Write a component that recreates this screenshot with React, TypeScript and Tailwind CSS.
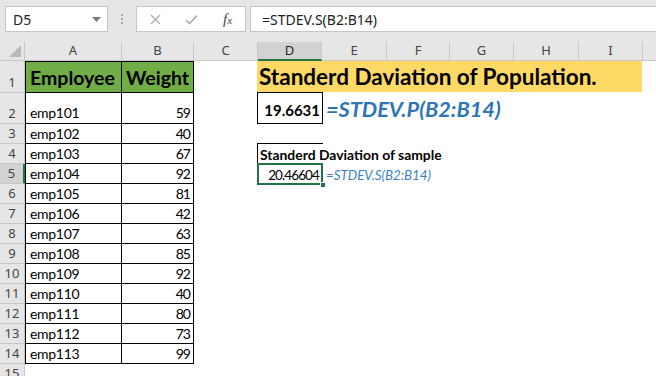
import React from "react";

const data: [string, number][] = [
  ["emp101", 59],
  ["emp102", 40],
  ["emp103", 67],
  ["emp104", 92],
  ["emp105", 81],
  ["emp106", 42],
  ["emp107", 63],
  ["emp108", 85],
  ["emp109", 92],
  ["emp110", 40],
  ["emp111", 80],
  ["emp112", 73],
  ["emp113", 99],
];

const cols: { l: string; w: string; sel?: boolean }[] = [
  { l: "A", w: "w-[97px]" },
  { l: "B", w: "w-[72px]" },
  { l: "C", w: "w-[64px]" },
  { l: "D", w: "w-[64px]", sel: true },
  { l: "E", w: "w-[65px]" },
  { l: "F", w: "w-[63px]" },
  { l: "G", w: "w-[64px]" },
  { l: "H", w: "w-[65px]" },
  { l: "I", w: "w-[64px]" },
];

function RowHead({ n, h, sel }: { n: number; h: string; sel?: boolean }) {
  return (
    <div
      className={`${h} w-[25px] shrink-0 flex items-end justify-center pb-[2px] text-[13px] leading-[16px] text-[#444] border-b border-[#c8c8c8] ${
        sel ? "bg-[#d2d2d2] border-r-2 border-r-[#217346]" : "bg-[#e6e6e6] border-r border-r-[#c8c8c8]"
      }`}
      style={{ fontFamily: '"Noto Sans", sans-serif' }}
    >
      {n}
    </div>
  );
}

const cellFont = { fontFamily: 'Lato, "Noto Sans", sans-serif' };

export default function App() {
  return (
    <div className="w-[656px] h-[376px] overflow-hidden bg-white flex flex-col">
      {/* toolbar */}
      <div
        className="h-[42px] shrink-0 bg-[#e6e6e6] flex items-start pt-[6px]"
        style={{ fontFamily: '"Noto Sans", sans-serif' }}
      >
        <div className="ml-[5px] w-[103px] h-[26px] bg-white border border-[#c6c6c6] flex items-center pl-[7px] pr-[6px] text-[14px] text-[#222]">
          <span className="flex-1">D5</span>
          <svg width="9" height="5" viewBox="0 0 9 5">
            <path d="M0 0 L9 0 L4.5 5 Z" fill="#7a7a7a" />
          </svg>
        </div>
        <div className="ml-[13px] w-[2px] h-[26px] flex flex-col items-center justify-center gap-[2px]">
          <div className="w-[2px] h-[2px] bg-[#a8a8a8]" />
          <div className="w-[2px] h-[2px] bg-[#a8a8a8]" />
          <div className="w-[2px] h-[2px] bg-[#a8a8a8]" />
        </div>
        <div className="ml-[13px] w-[110px] h-[26px] bg-white border border-[#c6c6c6] flex items-center">
          <svg className="ml-[13px]" width="11" height="11" viewBox="0 0 11 11">
            <path d="M1 1 L10 10 M10 1 L1 10" stroke="#ababab" strokeWidth="1.3" fill="none" />
          </svg>
          <svg className="ml-[24px]" width="13" height="11" viewBox="0 0 13 11">
            <path d="M1 6 L4.5 9.5 L12 1.5" stroke="#ababab" strokeWidth="1.6" fill="none" />
          </svg>
          <span
            className="ml-[25px] text-[15px] italic text-[#444] leading-none"
            style={{ fontFamily: '"Liberation Serif", serif' }}
          >
            f<span className="text-[11px]">x</span>
          </span>
        </div>
        <div className="ml-[4px] flex-1 h-[26px] bg-white border border-[#c6c6c6] border-r-0 flex items-center pl-[11px] text-[14px] text-[#222]">
          =STDEV.S(B2:B14)
        </div>
      </div>

      {/* column headers */}
      <div
        className="h-[19px] shrink-0 flex bg-[#e6e6e6] text-[13px] text-[#444]"
        style={{ fontFamily: '"Noto Sans", sans-serif' }}
      >
        <div className="w-[25px] shrink-0 border-r border-b border-[#c8c8c8] relative">
          <svg className="absolute right-[3px] bottom-[3px]" width="12" height="12" viewBox="0 0 12 12">
            <path d="M12 0 L12 12 L0 12 Z" fill="#b9b9b9" />
          </svg>
        </div>
        {cols.map((c) => (
          <div
            key={c.l}
            className={`${c.w} shrink-0 flex items-center justify-center border-r border-[#c8c8c8] ${
              c.sel ? "bg-[#d2d2d2] border-b-2 border-b-[#217346] text-[#222]" : "border-b"
            }`}
          >
            {c.l}
          </div>
        ))}
        <div className="flex-1 border-b border-[#c8c8c8]" />
      </div>

      {/* row 1 */}
      <div className="h-[32px] shrink-0 flex" style={cellFont}>
        <RowHead n={1} h="h-[32px]" />
        <div className="w-[97px] shrink-0 bg-[#70ad47] border border-black flex items-end pl-[4px] pb-[2px] text-[19.5px] font-bold text-black leading-[24px]">
          Employee
        </div>
        <div className="w-[72px] shrink-0 bg-[#70ad47] border-y border-r border-black flex items-end pl-[4px] pb-[2px] text-[19.5px] font-bold text-black leading-[24px]">
          Weight
        </div>
        <div className="w-[63px] shrink-0" />
        <div className="flex flex-col">
          <div className="w-[385px] h-[31px] bg-[#ffd966] flex items-end pl-[2px] pb-[1px] text-[22.5px] font-bold text-black leading-[28px] whitespace-nowrap">
            Standerd Daviation of Population.
          </div>
          <div className="w-[66px] h-[1px] bg-black" />
        </div>
      </div>

      {/* row 2 */}
      <div className="h-[31px] shrink-0 flex" style={cellFont}>
        <RowHead n={2} h="h-[31px]" />
        <div className="w-[97px] shrink-0 border-x border-b border-black flex items-end pl-[4px] pb-[1px] text-[14px] tracking-[-0.3px] leading-[18px]">
          {data[0][0]}
        </div>
        <div className="w-[72px] shrink-0 border-r border-b border-black flex items-end justify-end pr-[3px] pb-[1px] text-[14px] tracking-[-1px] leading-[18px]">
          {data[0][1]}
        </div>
        <div className="w-[63px] shrink-0" />
        <div className="w-[66px] shrink-0 border-x border-b border-black flex items-end justify-end pr-[2px] pb-[4px] text-[15px] font-bold leading-[18px]">
          19.6631
        </div>
        <div className="flex items-end pl-[3px] pb-[2px] text-[21.7px] font-bold italic text-[#2e75b6] leading-[26px] whitespace-nowrap">
          =STDEV.P(B2:B14)
        </div>
      </div>

      {/* rows 3..14 */}
      {data.slice(1).map(([name, w], i) => {
        const r = i + 3;
        return (
          <div key={r} className="h-[20px] shrink-0 flex" style={cellFont}>
            <RowHead n={r} h="h-[20px]" sel={r === 5} />
            <div className="w-[97px] shrink-0 border-x border-b border-black flex items-end pl-[4px] text-[14px] tracking-[-0.3px] leading-[18px]">
              {name}
            </div>
            <div className="w-[72px] shrink-0 border-r border-b border-black flex items-end justify-end pr-[3px] text-[14px] tracking-[-1px] leading-[18px]">
              {w}
            </div>
            <div className="w-[63px] shrink-0" />
            {r === 3 && <div className="w-[66px] shrink-0 border-b border-black" />}
            {r === 4 && (
              <div className="w-[66px] shrink-0 border-l border-black flex items-end pl-[2px] text-[13.9px] font-bold leading-[18px] whitespace-nowrap overflow-visible">
                Standerd Daviation of sample
              </div>
            )}
            {r === 5 && (
              <>
                <div className="w-[66px] shrink-0 relative flex items-end justify-end pr-[4px] text-[13.5px] tracking-[-0.9px] leading-[18px]">
                  20.46604
                  <div className="absolute left-0 -top-[1px] w-[66px] h-[22px] border-2 border-[#217346]" />
                  <div className="absolute -right-[3px] -bottom-[4px] w-[6px] h-[6px] bg-[#217346] border border-white" />
                </div>
                <div className="flex items-end pl-[3px] text-[13.3px] italic text-[#3a7fc6] leading-[18px] whitespace-nowrap">
                  =STDEV.S(B2:B14)
                </div>
              </>
            )}
          </div>
        );
      })}

      {/* row 15 */}
      <div className="h-[20px] shrink-0 flex">
        <RowHead n={15} h="h-[20px]" />
      </div>
    </div>
  );
}
